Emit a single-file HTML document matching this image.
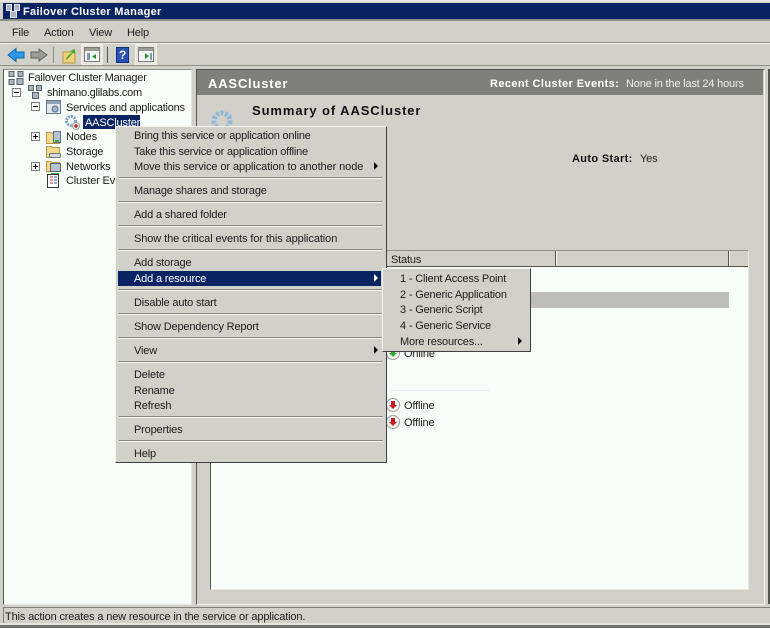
<!DOCTYPE html>
<html><head><meta charset="utf-8">
<style>
html,body{margin:0;padding:0;background:#d1d0c9}
#r{position:relative;width:770px;height:628px;overflow:hidden;background:#d1d0c9;font:11px "Liberation Sans",sans-serif;color:#1c1c1c}
#r div,#r svg{position:absolute}
.t{white-space:nowrap;line-height:14px;height:14px;margin-top:1px;letter-spacing:-.17px}
.sep{height:1px;background:#8a8a84;border-bottom:1px solid #f4f4ee;left:3px;width:264px}
.m{left:18px}
.n{left:17px}
.pm{width:7px;height:7px;border:1px solid #808080;background:#fafafa}
.pm::before{content:"";position:absolute;left:1px;top:3px;width:5px;height:1px;background:#000}
.pm.p::after{content:"";position:absolute;left:3px;top:1px;width:1px;height:5px;background:#000}
</style></head><body>
<div id="r">
<!-- title bar -->
<div style="left:0;top:0;width:770px;height:2px;background:#e6e5de"></div>
<div style="left:3px;top:3px;width:767px;height:16px;background:#0a2463"></div>
<div style="left:0;top:19px;width:770px;height:2px;background:#8f8f8a"></div>
<svg style="left:5px;top:3px" width="17" height="16" viewBox="0 0 17 16"><g fill="#aab4c0" stroke="#dfe4ea" stroke-width="1"><rect x="1.500" y="1.500" width="5" height="6"/><rect x="9.500" y="1.500" width="5" height="6"/><rect x="5.500" y="8.500" width="6" height="6"/></g></svg>
<div class="t" style="left:23px;top:4px;color:#fff;font-weight:bold;letter-spacing:.3px;font-size:11px">Failover Cluster Manager</div>
<!-- menu bar -->
<div class="t" style="left:12px;top:25px">File</div>
<div class="t" style="left:44px;top:25px">Action</div>
<div class="t" style="left:89px;top:25px">View</div>
<div class="t" style="left:127px;top:25px">Help</div>
<div style="left:0;top:42px;width:770px;height:1px;background:#8f8f8a"></div>
<div style="left:0;top:43px;width:770px;height:1px;background:#efeee8"></div>
<!-- toolbar -->
<svg style="left:0;top:44px" width="170" height="22" viewBox="0 0 170 22">
<path d="M8 11 L16 4.500 V8 H24 V14 H16 V17.500Z" fill="#2e9be6" stroke="#0d62b0"/>
<path d="M47 11 L39 5 V8 H31 V14 H39 V17Z" fill="#9c9c96" stroke="#63635f"/>
<rect x="53" y="3" width="1" height="16" fill="#8f8f8a"/>
<path d="M63 8 H75 V19 H63Z" fill="#f0d27a" stroke="#b79a45"/>
<path d="M66 15 C68 11 70 10 72 9 L70 7 L75 5 L75 10 L73 9 C71 11 69 14 66 16Z" fill="#4ca82c"/>
<rect x="81.500" y="0.500" width="21" height="20" fill="#e6e5de" stroke="#efeee8"/>
<rect x="84.500" y="3.500" width="15" height="14" fill="#f4f6f6" stroke="#7b7b78"/>
<rect x="85" y="4" width="14" height="3" fill="#9a9a96"/>
<path d="M92 12.500 L96 10 V15Z" fill="#1f9a30"/>
<rect x="87" y="9" width="3" height="7" fill="#7c98b4"/>
<rect x="107" y="3" width="1" height="16" fill="#55554f"/>
<rect x="116.500" y="3.500" width="12" height="15" fill="#2a52b4" stroke="#12307a"/>
<text x="119" y="15" font-family="Liberation Sans" font-size="12" font-weight="bold" fill="#fff">?</text>
<rect x="135.500" y="0.500" width="21" height="20" fill="#e6e5de" stroke="#efeee8"/>
<rect x="138.500" y="3.500" width="15" height="14" fill="#f4f6f6" stroke="#7b7b78"/>
<rect x="139" y="4" width="14" height="3" fill="#9a9a96"/>
<path d="M145 9 L149 12 L145 15Z" fill="#1f9a30"/>
<rect x="150" y="9" width="2" height="7" fill="#7c98b4"/>
</svg>
<div style="left:0;top:65px;width:770px;height:1px;background:#8f8f8a"></div>
<!-- tree pane -->
<div style="left:3px;top:69px;width:187px;height:534px;background:#f8fdf9;border-left:1px solid #55554f;border-top:1px solid #8f8f8a;border-right:1px solid #e6e5de;border-bottom:1px solid #e6e5de"></div>
<svg style="left:7px;top:70px" width="18" height="16" viewBox="0 0 17 16"><g fill="#a9b4bd" stroke="#55616b"><rect x="1.500" y="1.500" width="5" height="5"/><rect x="10.500" y="1.500" width="5" height="5"/><rect x="1.500" y="9.500" width="5" height="5"/><rect x="9.500" y="8.500" width="6" height="6"/></g></svg>
<div class="t" style="left:28px;top:70px;letter-spacing:-.2px">Failover Cluster Manager</div>
<div class="pm" style="left:12px;top:88px"></div>
<svg style="left:27px;top:84px" width="16" height="16" viewBox="0 0 16 16"><g fill="#a9b4bd" stroke="#55616b"><rect x="1.500" y="1.500" width="5" height="5"/><rect x="9.500" y="1.500" width="5" height="5"/><rect x="5.500" y="8.500" width="6" height="6"/></g></svg>
<div class="t" style="left:47px;top:85px;letter-spacing:-.25px">shimano.glilabs.com</div>
<div class="pm" style="left:31px;top:102px"></div>
<svg style="left:45px;top:99px" width="17" height="16" viewBox="0 0 17 16"><rect x="1.500" y="1.500" width="14" height="13" fill="#dfe6ee" stroke="#6c7885"/><rect x="2" y="2" width="13" height="3" fill="#8da3b8"/><circle cx="10" cy="10" r="3" fill="#9fb4c8" stroke="#5c7286"/></svg>
<div class="t" style="left:66px;top:100px;letter-spacing:-.24px">Services and applications</div>
<svg style="left:64px;top:114px" width="17" height="16" viewBox="0 0 17 16"><circle cx="7" cy="7" r="4.500" fill="none" stroke="#7fa6c8" stroke-width="3" stroke-dasharray="2 1"/><circle cx="12" cy="12" r="3.500" fill="#f2f2f2" stroke="#999"/><path d="M10 12h4M12 10v4" stroke="#c02020" stroke-width="1.500"/></svg>
<div style="left:83px;top:115px;width:57px;height:14px;background:#0a2463"></div>
<div class="t" style="left:85px;top:115px;color:#fff">AASCluster</div>
<div class="pm p" style="left:31px;top:132px"></div>
<svg style="left:45px;top:129px" width="17" height="16" viewBox="0 0 17 16"><path d="M1.500 3.500h5l1 1h7v10h-13z" fill="#f2d98e" stroke="#b79a45"/><rect x="8.500" y="2.500" width="7" height="11" fill="#b7c5d2" stroke="#63727f"/><rect x="10" y="11" width="4" height="2" fill="#3ca83c"/></svg>
<div class="t" style="left:66px;top:129px">Nodes</div>
<svg style="left:45px;top:144px" width="17" height="16" viewBox="0 0 17 16"><path d="M1.500 2.500h5l1 1h7v10h-13z" fill="#f2d98e" stroke="#b79a45"/><rect x="4.500" y="9.500" width="11" height="4" rx="1" fill="#d4d8dc" stroke="#6c7885"/></svg>
<div class="t" style="left:66px;top:144px">Storage</div>
<div class="pm p" style="left:31px;top:162px"></div>
<svg style="left:45px;top:158px" width="17" height="18" viewBox="0 0 17 18"><path d="M1.500 3.500h5l1 1h7v9h-13z" fill="#f2d98e" stroke="#b79a45"/><rect x="5.500" y="5.500" width="10" height="8" fill="#b7c5d2" stroke="#55616b"/><path d="M6 15h8v2H6z" fill="#2fa84f"/></svg>
<div class="t" style="left:66px;top:159px">Networks</div>
<svg style="left:46px;top:173px" width="15" height="16" viewBox="0 0 15 16"><rect x="1.500" y="1.500" width="11" height="13" fill="#fff" stroke="#333"/><path d="M4 4h3M4 7h3M4 10h3" stroke="#c03030"/><path d="M8 4h3M8 7h3M8 10h3" stroke="#3050c0"/></svg>
<div class="t" style="left:66px;top:173px">Cluster Events</div>
<!-- right pane -->
<div style="left:196px;top:69px;width:567px;height:534px;background:#d1d0c9;border-left:1px solid #55554f;border-top:1px solid #55554f;border-right:1px solid #f4f4ee;border-bottom:1px solid #f4f4ee"></div>
<div style="left:197px;top:70px;width:566px;height:25px;background:#7f7f7b"></div>
<div style="left:768px;top:69px;width:2px;height:535px;background:#55554f"></div>
<div class="t" style="left:208px;top:76px;color:#fff;font-weight:bold;font-size:13px;letter-spacing:.8px">AASCluster</div>
<div class="t" style="left:490px;top:76px;color:#fff;font-weight:bold;letter-spacing:.4px">Recent Cluster Events:</div>
<div class="t" style="left:626px;top:76px;color:#f0f0ea;letter-spacing:-.18px">None in the last 24 hours</div>
<svg style="left:208px;top:106px" width="30" height="24" viewBox="0 0 30 24"><circle cx="14" cy="15" r="8" fill="none" stroke="#8fb8d8" stroke-width="5" stroke-dasharray="3 1.500"/></svg>
<div class="t" style="left:252px;top:103px;font-weight:bold;font-size:13px;letter-spacing:.9px;color:#111">Summary of AASCluster</div>
<div class="t" style="left:572px;top:151px;font-weight:bold;color:#111;letter-spacing:.35px">Auto Start:</div>
<div class="t" style="left:640px;top:151px">Yes</div>
<!-- list -->
<div style="left:210px;top:250px;width:537px;height:338px;background:#f8fdf9;border-left:1px solid #55554f;border-top:1px solid #8f8f8a;border-right:1px solid #e6e5de;border-bottom:1px solid #e6e5de"></div>
<div style="left:211px;top:251px;width:537px;height:15px;background:#d1d0c9;border-bottom:1px solid #55554f"></div>
<div class="t" style="left:391px;top:252px">Status</div>
<div style="left:555px;top:251px;width:2px;height:15px;background:linear-gradient(90deg,#55554f 50%,#f4f4ee 50%)"></div>
<div style="left:728px;top:251px;width:2px;height:15px;background:linear-gradient(90deg,#55554f 50%,#f4f4ee 50%)"></div>
<div style="left:400px;top:292px;width:329px;height:16px;background:#bdbdbc"></div>
<div style="left:390px;top:390px;width:100px;height:1px;background:#e8f0f6"></div>
<svg style="left:385px;top:345px" width="16" height="16" viewBox="0 0 16 16"><circle cx="8" cy="8" r="6.500" fill="#f4f4f4" stroke="#a0a0a0"/><path d="M8 12 L4 8H6V5H10V8H12Z" fill="#2fb02f"/></svg>
<div class="t" style="left:404px;top:346px">Online</div>
<svg style="left:385px;top:397px" width="16" height="16" viewBox="0 0 16 16"><circle cx="8" cy="8" r="6.500" fill="#f4f4f4" stroke="#a0a0a0"/><path d="M8 12 L4 8H6V4H10V8H12Z" fill="#c81e1e"/></svg>
<div class="t" style="left:404px;top:398px">Offline</div>
<svg style="left:385px;top:414px" width="16" height="16" viewBox="0 0 16 16"><circle cx="8" cy="8" r="6.500" fill="#f4f4f4" stroke="#a0a0a0"/><path d="M8 12 L4 8H6V4H10V8H12Z" fill="#c81e1e"/></svg>
<div class="t" style="left:404px;top:415px">Offline</div>
<!-- status bar -->
<div style="left:3px;top:607px;width:767px;height:1px;background:#7f7f7b"></div>
<div style="left:3px;top:607px;width:1px;height:18px;background:#7f7f7b"></div>
<div style="left:0;top:623px;width:770px;height:2px;background:#e6e5de"></div>
<div style="left:0;top:625px;width:770px;height:3px;background:#6f6f6b"></div>
<div class="t" style="left:5px;top:609px;letter-spacing:-.15px">This action creates a new resource in the service or application.</div>
<!-- context menu -->
<div style="left:115px;top:126px;width:270px;height:335px;background:#d1d0c9;border-top:1px solid #f4f4ee;border-left:1px solid #f4f4ee;border-right:1px solid #404040;border-bottom:1px solid #404040">
<div class="t m" style="top:1px;letter-spacing:-.2px">Bring this service or application online</div>
<div class="t m" style="top:17px;letter-spacing:-.2px">Take this service or application offline</div>
<div class="t m" style="top:32px;letter-spacing:-.09px">Move this service or application to another node</div>
<div class="sep" style="top:50px"></div>
<div class="t m" style="top:56px">Manage shares and storage</div>
<div class="sep" style="top:74px"></div>
<div class="t m" style="top:80px">Add a shared folder</div>
<div class="sep" style="top:98px"></div>
<div class="t m" style="top:104px;letter-spacing:-.09px">Show the critical events for this application</div>
<div class="sep" style="top:122px"></div>
<div class="t m" style="top:128px">Add storage</div>
<div style="left:2px;top:144px;width:263px;height:15px;background:#0a2463"></div>
<div class="t m" style="top:144px;color:#fff">Add a resource</div>
<div class="sep" style="top:162px"></div>
<div class="t m" style="top:168px">Disable auto start</div>
<div class="sep" style="top:186px"></div>
<div class="t m" style="top:192px">Show Dependency Report</div>
<div class="sep" style="top:210px"></div>
<div class="t m" style="top:216px">View</div>
<div class="sep" style="top:234px"></div>
<div class="t m" style="top:240px">Delete</div>
<div class="t m" style="top:256px">Rename</div>
<div class="t m" style="top:271px">Refresh</div>
<div class="sep" style="top:289px"></div>
<div class="t m" style="top:295px">Properties</div>
<div class="sep" style="top:313px"></div>
<div class="t m" style="top:319px">Help</div>
<svg style="left:258px;top:35px" width="5" height="8"><path d="M0 0L4 4L0 8Z" fill="#111"/></svg>
<svg style="left:258px;top:147px" width="5" height="8"><path d="M0 0L4 4L0 8Z" fill="#fff"/></svg>
<svg style="left:258px;top:219px" width="5" height="8"><path d="M0 0L4 4L0 8Z" fill="#111"/></svg>
</div>
<!-- submenu -->
<div style="left:382px;top:268px;width:147px;height:82px;background:#d1d0c9;border-top:1px solid #f4f4ee;border-left:1px solid #f4f4ee;border-right:1px solid #404040;border-bottom:1px solid #404040">
<div class="t n" style="top:2px">1 - Client Access Point</div>
<div class="t n" style="top:18px">2 - Generic Application</div>
<div class="t n" style="top:33px">3 - Generic Script</div>
<div class="t n" style="top:49px">4 - Generic Service</div>
<div class="t n" style="top:65px">More resources...</div>
<svg style="left:135px;top:68px" width="5" height="8"><path d="M0 0L4 4L0 8Z" fill="#111"/></svg>
</div>
</div>
</body></html>
